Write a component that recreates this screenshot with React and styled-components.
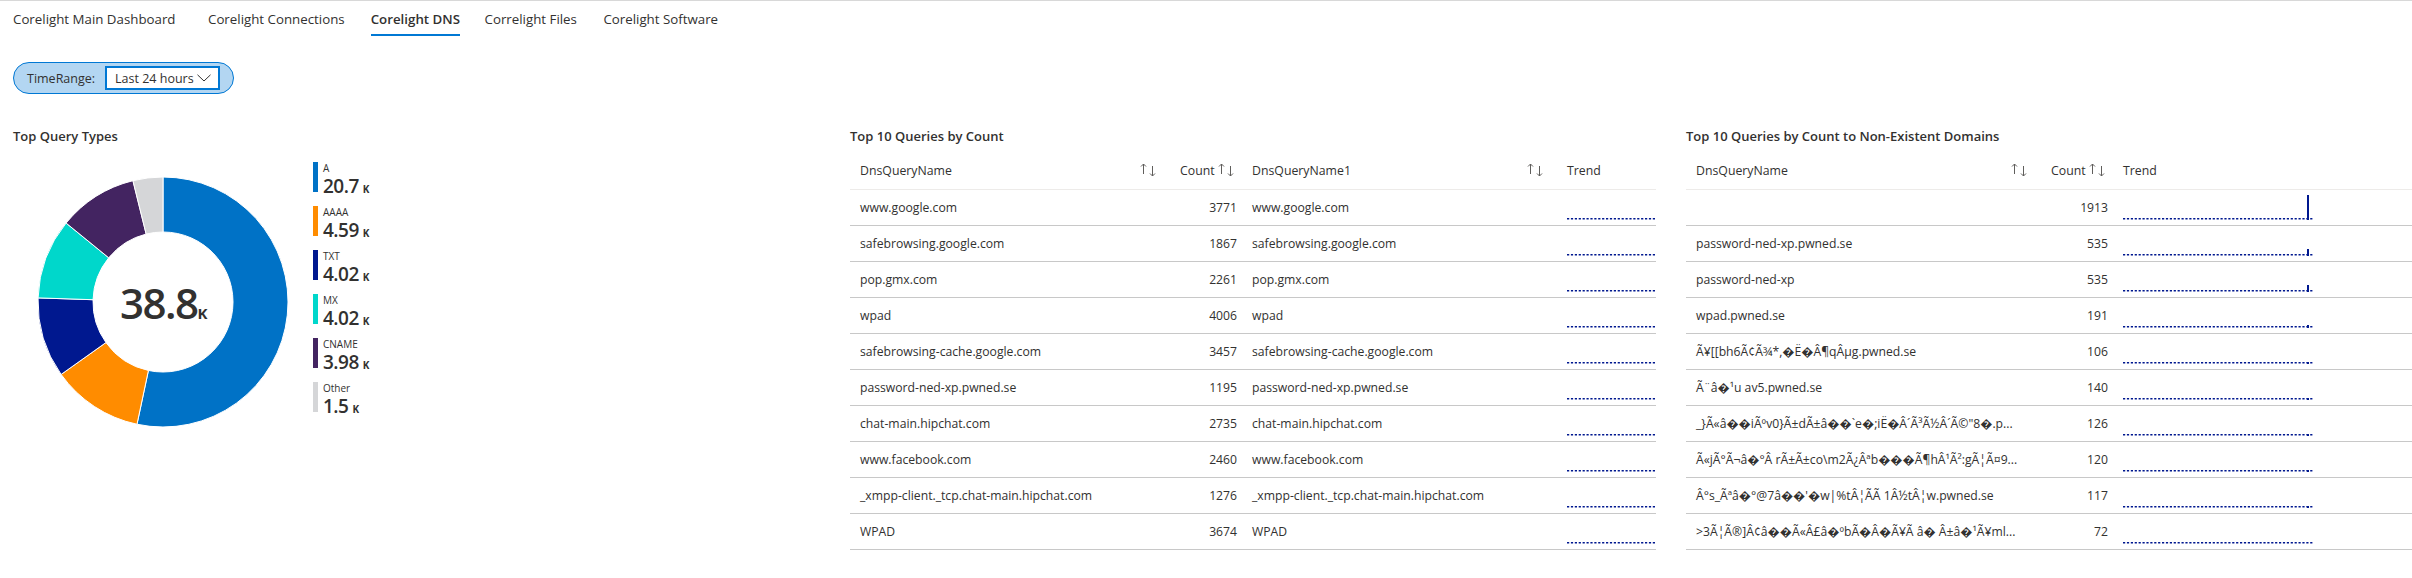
import React from 'react';
import styled, { createGlobalStyle } from 'styled-components';

const GlobalStyle = createGlobalStyle`
  html, body {
    margin: 0;
    padding: 0;
    background: #fff;
  }
  body {
    font-family: "Open Sans", "Noto Sans", sans-serif;
    color: #323130;
    font-size: 13px;
  }
`;

const Page = styled.div`
  width: 2412px;
  height: 578px;
  overflow: hidden;
  border-top: 1px solid #d8d8d8;
  box-sizing: border-box;
`;

const Tabs = styled.div`
  display: flex;
  height: 35px;
  padding-left: 13px;
`;

const Tab = styled.div`
  height: 35px;
  margin-left: ${(p) => p.$gap || 0}px;
  line-height: 36px;
  box-sizing: border-box;
  font-size: 13.3px;
  font-weight: ${(p) => (p.$active ? 600 : 400)};
  color: #323130;
  white-space: nowrap;
  border-bottom: 2px solid ${(p) => (p.$active ? '#0078d4' : 'transparent')};
`;

const ParamBar = styled.div`
  display: flex;
  padding: 26px 0 0 13px;
`;

const Pill = styled.div`
  display: flex;
  align-items: center;
  box-sizing: border-box;
  width: 221px;
  height: 32px;
  padding-left: 13px;
  background: #b3d6f2;
  border: 1px solid #0078d4;
  border-radius: 16px;
  gap: 10px;
  font-size: 12.5px;
`;

const Select = styled.div`
  display: flex;
  align-items: center;
  justify-content: space-between;
  box-sizing: border-box;
  width: 115px;
  height: 24px;
  padding: 0 7px 0 8px;
  background: #fff;
  border: 2px solid #0078d4;
  font-size: 12.5px;
  white-space: nowrap;
`;

const Panels = styled.div`
  display: grid;
  grid-template-columns: 837px 836px 726px;
  padding: 32px 0 0 13px;
`;

const Panel = styled.section`
  min-width: 0;
  margin-right: ${(p) => p.$gutter || 0}px;
`;

const PanelTitle = styled.h2`
  margin: 0;
  height: 20px;
  line-height: 20px;
  font-size: 13px;
  font-weight: 600;
  color: #323130;
`;

const ChartRow = styled.div`
  display: flex;
  padding-top: 16px;
`;

const DonutBox = styled.div`
  position: relative;
  box-sizing: border-box;
  width: 300px;
  height: 250px;
  margin-top: 15px;
  padding-left: 25px;
`;

const DonutTotal = styled.div`
  position: absolute;
  left: 107px;
  top: 101px;
  display: flex;
  align-items: baseline;
  font-size: 42px;
  line-height: 50px;
  font-weight: 600;
  letter-spacing: -1.5px;
  color: #323130;
`;

const TotalUnit = styled.span`
  font-size: 15px;
  font-weight: 700;
  letter-spacing: 0;
`;

const Legend = styled.div`
  display: flex;
  flex-direction: column;
  gap: 14px;
`;

const LegendItem = styled.div`
  height: 30px;
  padding-left: 5px;
  border-left: 5px solid ${(p) => p.$color};
  display: flex;
  flex-direction: column;
  color: #323130;
`;

const LegendLabel = styled.div`
  font-size: 10px;
  line-height: 12px;
  height: 12px;
`;

const LegendValue = styled.div`
  font-size: 19px;
  line-height: 24px;
  font-weight: 600;
  letter-spacing: -0.5px;
  display: flex;
  align-items: baseline;
  gap: 4px;
`;

const LegendUnit = styled.span`
  font-size: 10px;
  font-weight: 700;
  letter-spacing: 0;
`;

const GridTable = styled.table`
  margin-top: 6px;
  width: 100%;
  table-layout: fixed;
  border-collapse: collapse;
`;

const HeadCell = styled.th`
  height: 37px;
  box-sizing: border-box;
  padding: ${(p) => (p.$count ? '0 8px 0 10px' : '0 14px 0 10px')};
  border-bottom: 1px solid #edebe9;
  font-size: 12.3px;
  font-weight: 500;
  color: #323130;
  text-align: left;
  vertical-align: middle;
`;

const HeadInner = styled.div`
  display: flex;
  align-items: center;
  justify-content: space-between;
`;

const Cell = styled.td`
  height: 36px;
  box-sizing: border-box;
  padding: ${(p) => (p.$count ? '0 5px 0 0' : '0 8px 0 10px')};
  border-bottom: 1px solid #c8c8c8;
  font-size: 12.2px;
  color: #323130;
  text-align: ${(p) => (p.$count ? 'right' : 'left')};
  white-space: nowrap;
  overflow: hidden;
  text-overflow: ellipsis;
`;

const TrendCell = styled.td`
  height: 36px;
  box-sizing: border-box;
  padding: 0 0 0 10px;
  border-bottom: 1px solid #c8c8c8;
  vertical-align: bottom;
  overflow: hidden;
`;

const Spark = styled.svg`
  display: block;
  margin-bottom: 5px;
`;

const SortArrows = () => (
  <svg width="16" height="14" viewBox="0 0 16 14" fill="none" stroke="#605e5c" strokeWidth="1">
    <path d="M3.5 11V1M1 3.5 3.5 1 6 3.5" />
    <path d="M12.5 3v10M10 10.5l2.5 2.5 2.5-2.5" />
  </svg>
);

const Chevron = () => (
  <svg width="14" height="8" viewBox="0 0 14 8" fill="none" stroke="#323130" strokeWidth="1">
    <path d="M0.5 0.8 7 7 13.5 0.8" />
  </svg>
);

const Sparkline = ({ width, spike }) => (
  <Spark width={width} height="26" viewBox={`0 0 ${width} 26`}>
    <line x1="0" y1="24.75" x2="190" y2="24.75" stroke="#00188f" strokeWidth="1.5" strokeDasharray="2.2 1.7" />
    {spike > 0 && <rect x="184" y={26 - spike} width="2" height={spike} fill="#00188f" />}
  </Spark>
);

const slices = [
  { label: 'A', value: 20.7, text: '20.7', color: '#0072c6' },
  { label: 'AAAA', value: 4.59, text: '4.59', color: '#ff8c00' },
  { label: 'TXT', value: 4.02, text: '4.02', color: '#00188f' },
  { label: 'MX', value: 4.02, text: '4.02', color: '#00d7cb' },
  { label: 'CNAME', value: 3.98, text: '3.98', color: '#432461' },
  { label: 'Other', value: 1.5, text: '1.5', color: '#d5d6d8' },
];

const polar = (r, a) => [125 + r * Math.sin(a), 125 - r * Math.cos(a)];

const slicePath = (start, end) => {
  const [x1, y1] = polar(125, start);
  const [x2, y2] = polar(125, end);
  const [x3, y3] = polar(70, end);
  const [x4, y4] = polar(70, start);
  const large = end - start > Math.PI ? 1 : 0;
  return `M${x1} ${y1}A125 125 0 ${large} 1 ${x2} ${y2}L${x3} ${y3}A70 70 0 ${large} 0 ${x4} ${y4}Z`;
};

const Donut = () => {
  const total = slices.reduce((sum, s) => sum + s.value, 0);
  let angle = 0;
  return (
    <svg width="250" height="250" viewBox="0 0 250 250">
      {slices.map((s) => {
        const start = angle;
        angle += (s.value / total) * Math.PI * 2;
        return <path key={s.label} d={slicePath(start, angle)} fill={s.color} stroke="#fff" strokeWidth="1" />;
      })}
    </svg>
  );
};

const topQueries = [
  ['www.google.com', 3771],
  ['safebrowsing.google.com', 1867],
  ['pop.gmx.com', 2261],
  ['wpad', 4006],
  ['safebrowsing-cache.google.com', 3457],
  ['password-ned-xp.pwned.se', 1195],
  ['chat-main.hipchat.com', 2735],
  ['www.facebook.com', 2460],
  ['_xmpp-client._tcp.chat-main.hipchat.com', 1276],
  ['WPAD', 3674],
];

const nxQueries = [
  ['', 1913, 25],
  ['password-ned-xp.pwned.se', 535, 7],
  ['password-ned-xp', 535, 7],
  ['wpad.pwned.se', 191, 3],
  ['Ã¥[[bh6Ã¢Ã¾*,�Ë�Â¶qÂµg.pwned.se', 106, 2],
  ['Ã¨â�¹u av5.pwned.se', 140, 2],
  ['_}Ã«â��iÃºv0}Ã±dÃ±â��`e�;iË�Â´Ã³Ã½Â´Ã©"8�.p...', 126, 2],
  ['Ã«jÃ°Ã¬â�°Â rÃ±Ã±co\\m2Ã¿Âªb���Ã¶hÂ¹Ã²:gÃ¦Ã¤9...', 120, 2],
  ['Â°s_Ãªâ�°@7â��\'�w|%tÂ¦ÃÃ 1Â½tÂ¦w.pwned.se', 117, 2],
  ['>3Ã¦Ã®]Â¢â��Ã«Â£â�ºbÃ�Â�Ã¥Ã â� Â±â�¹Ã¥ml...', 72, 0],
];

const Head = ({ children, count, sort = true }) => (
  <HeadCell $count={count}>
    <HeadInner>
      <span>{children}</span>
      {sort && <SortArrows />}
    </HeadInner>
  </HeadCell>
);

export default function App() {
  return (
    <Page>
      <GlobalStyle />
      <Tabs>
        <Tab>Corelight Main Dashboard</Tab>
        <Tab $gap={32.5}>Corelight Connections</Tab>
        <Tab $gap={26} $active>Corelight DNS</Tab>
        <Tab $gap={24.5}>Correlight Files</Tab>
        <Tab $gap={26.5}>Corelight Software</Tab>
      </Tabs>
      <ParamBar>
        <Pill>
          <span>TimeRange:</span>
          <Select>
            <span>Last 24 hours</span>
            <Chevron />
          </Select>
        </Pill>
      </ParamBar>
      <Panels>
        <Panel>
          <PanelTitle>Top Query Types</PanelTitle>
          <ChartRow>
            <DonutBox>
              <Donut />
              <DonutTotal>
                38.8<TotalUnit>K</TotalUnit>
              </DonutTotal>
            </DonutBox>
            <Legend>
              {slices.map((s) => (
                <LegendItem key={s.label} $color={s.color}>
                  <LegendLabel>{s.label}</LegendLabel>
                  <LegendValue>
                    {s.text}
                    <LegendUnit>K</LegendUnit>
                  </LegendValue>
                </LegendItem>
              ))}
            </Legend>
          </ChartRow>
        </Panel>
        <Panel $gutter={30}>
          <PanelTitle>Top 10 Queries by Count</PanelTitle>
          <GridTable>
            <colgroup>
              <col style={{ width: 320 }} />
              <col style={{ width: 72 }} />
              <col style={{ width: 315 }} />
              <col style={{ width: 99 }} />
            </colgroup>
            <thead>
              <tr>
                <Head>DnsQueryName</Head>
                <Head count>Count</Head>
                <Head>DnsQueryName1</Head>
                <Head sort={false}>Trend</Head>
              </tr>
            </thead>
            <tbody>
              {topQueries.map(([name, count]) => (
                <tr key={name}>
                  <Cell>{name}</Cell>
                  <Cell $count>{count}</Cell>
                  <Cell>{name}</Cell>
                  <TrendCell>
                    <Sparkline width={89} spike={0} />
                  </TrendCell>
                </tr>
              ))}
            </tbody>
          </GridTable>
        </Panel>
        <Panel>
          <PanelTitle>Top 10 Queries by Count to Non-Existent Domains</PanelTitle>
          <GridTable>
            <colgroup>
              <col style={{ width: 355 }} />
              <col style={{ width: 72 }} />
              <col />
            </colgroup>
            <thead>
              <tr>
                <Head>DnsQueryName</Head>
                <Head count>Count</Head>
                <Head sort={false}>Trend</Head>
              </tr>
            </thead>
            <tbody>
              {nxQueries.map(([name, count, spike]) => (
                <tr key={name + count}>
                  <Cell>{name}</Cell>
                  <Cell $count>{count}</Cell>
                  <TrendCell>
                    <Sparkline width={190} spike={spike} />
                  </TrendCell>
                </tr>
              ))}
            </tbody>
          </GridTable>
        </Panel>
      </Panels>
    </Page>
  );
}
